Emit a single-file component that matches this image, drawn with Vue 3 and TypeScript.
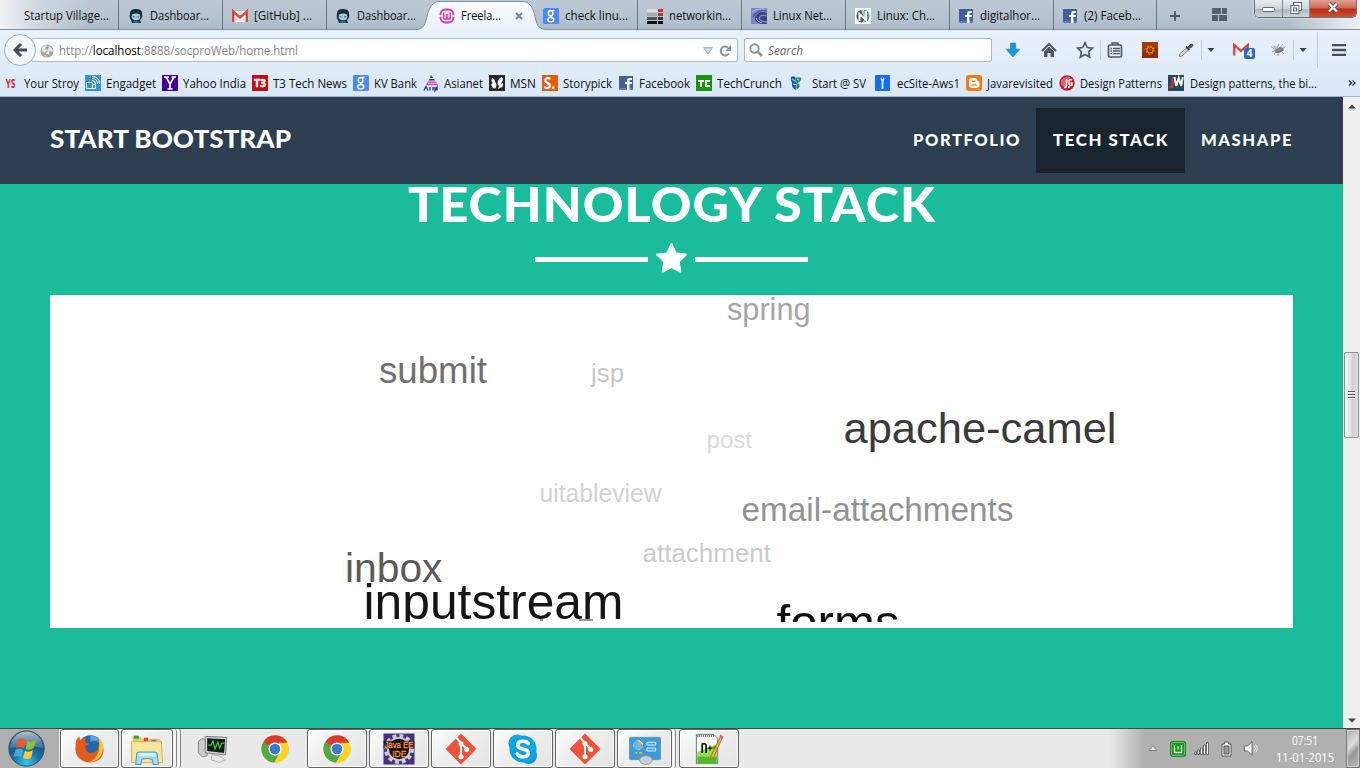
<script setup lang="ts">
import type { Directive } from 'vue'

interface Tab { title: string; icon: string; w: number; tw: number; pad: number; gap: number; active?: boolean }
interface Bookmark { title: string; icon: string; w: number; tw: number; gap: number }
interface Tool { icon: string; ml: number; w: number; h: number }
interface Word { t: string; x: number; y: number; s: number; w: number; c: string }
interface Task { icon: string; ml: number; w: number; iw: number; framed: boolean; stack?: number }

/* Condenses a label horizontally so that it fills exactly the given width. */
const vFit: Directive<HTMLElement, number> = {
  mounted(el, binding) {
    const natural = el.getBoundingClientRect().width
    if (!natural) return
    el.style.transform = `scaleX(${binding.value / natural})`
    el.style.marginRight = `${binding.value - natural}px`
  },
}

const tabs: Tab[] = [
  { title: 'Startup Village...', icon: '', w: 119, tw: 85, pad: 24, gap: 0 },
  { title: 'Dashboar...', icon: 'octo', w: 104, tw: 59, pad: 9, gap: 6 },
  { title: '[GitHub] ...', icon: 'gmail', w: 104, tw: 58, pad: 9, gap: 6 },
  { title: 'Dashboar...', icon: 'octo', w: 104, tw: 59, pad: 8, gap: 6 },
  { title: 'Freela...', icon: 'wamp', w: 104, tw: 40, pad: 7, gap: 6, active: true },
  { title: 'check linu...', icon: 'google', w: 103, tw: 63, pad: 8, gap: 6 },
  { title: 'networkin...', icon: 'net', w: 104, tw: 62, pad: 9, gap: 6 },
  { title: 'Linux Net...', icon: 'linux', w: 104, tw: 59, pad: 9, gap: 6 },
  { title: 'Linux: Ch...', icon: 'nix', w: 104, tw: 58, pad: 9, gap: 6 },
  { title: 'digitalhor...', icon: 'fb', w: 104, tw: 60, pad: 8, gap: 6 },
  { title: '(2) Faceb...', icon: 'fb', w: 103, tw: 57, pad: 8, gap: 6 },
]

const bookmarks: Bookmark[] = [
  { title: 'Your Stroy', icon: 'ys', w: 82, tw: 55, gap: 5 },
  { title: 'Engadget', icon: 'engadget', w: 77, tw: 50, gap: 5 },
  { title: 'Yahoo India', icon: 'yahoo', w: 90, tw: 63, gap: 5 },
  { title: 'T3 Tech News', icon: 't3', w: 101, tw: 74, gap: 5 },
  { title: 'KV Bank', icon: 'google', w: 70, tw: 43, gap: 5 },
  { title: 'Asianet', icon: 'asianet', w: 66, tw: 39, gap: 5 },
  { title: 'MSN', icon: 'msn', w: 53, tw: 26, gap: 5 },
  { title: 'Storypick', icon: 'story', w: 76, tw: 49, gap: 5 },
  { title: 'Facebook', icon: 'fb', w: 78, tw: 51, gap: 5 },
  { title: 'TechCrunch', icon: 'tc', w: 92, tw: 65, gap: 5 },
  { title: 'Start @ SV', icon: 'sv', w: 87, tw: 54, gap: 8 },
  { title: 'ecSite-Aws1', icon: 'ec', w: 91, tw: 63, gap: 6 },
  { title: 'Javarevisited', icon: 'blogger', w: 93, tw: 66, gap: 5 },
  { title: 'Design Patterns', icon: 'jg', w: 109, tw: 82, gap: 5 },
  { title: 'Design patterns, the bi...', icon: 'jw', w: 160, tw: 127, gap: 6 },
]

const tools: Tool[] = [
  { icon: 'download', ml: 14, w: 14, h: 14 },
  { icon: 'home', ml: 21, w: 16, h: 16 },
  { icon: 'star', ml: 19, w: 18, h: 18 },
  { icon: 'sep', ml: 6, w: 1, h: 20 },
  { icon: 'list', ml: 6, w: 16, h: 16 },
  { icon: 'gear', ml: 19, w: 16, h: 16 },
  { icon: 'dropper', ml: 20, w: 16, h: 16 },
  { icon: 'sep', ml: 7, w: 1, h: 20 },
  { icon: 'caret', ml: 5, w: 8, h: 8 },
  { icon: 'mail4', ml: 18, w: 22, h: 17 },
  { icon: 'bug', ml: 15, w: 16, h: 16 },
  { icon: 'sep', ml: 7, w: 1, h: 20 },
  { icon: 'caret', ml: 5, w: 8, h: 8 },
  { icon: 'sep', ml: 10, w: 1, h: 36 },
  { icon: 'menu', ml: 13, w: 16, h: 14 },
]

const words: Word[] = [
  { t: 'spring', x: 677, y: 25, s: 30.5, w: 83.5, c: '#a6a6a6' },
  { t: 'submit', x: 329, y: 88, s: 37, w: 108, c: '#707070' },
  { t: 'jsp', x: 541, y: 87, s: 25.5, w: 33, c: '#c8c8c8' },
  { t: 'apache-camel', x: 793.5, y: 148, s: 43, w: 273, c: '#3a3a3a' },
  { t: 'post', x: 656.5, y: 152.5, s: 24, w: 45.5, c: '#dadada' },
  { t: 'uitableview', x: 489.5, y: 206.5, s: 25.5, w: 122, c: '#d2d2d2' },
  { t: 'email-attachments', x: 691.5, y: 226, s: 34, w: 272, c: '#929292' },
  { t: 'attachment', x: 592.5, y: 267, s: 25.5, w: 128.5, c: '#cccccc' },
  { t: 'inbox', x: 295, y: 287, s: 41, w: 97.5, c: '#5a5a5a' },
  { t: 'inputstream', x: 313.5, y: 324, s: 49.5, w: 260, c: '#151515' },
  { t: 'forms', x: 726.5, y: 344, s: 49, w: 123, c: '#111111' },
]

const tasks: Task[] = [
  { icon: 'firefox', ml: 1, w: 59, iw: 31, framed: true },
  { icon: 'explorer', ml: 2, w: 52, iw: 34, framed: true, stack: 2 },
  { icon: 'monitor', ml: 4, w: 56, iw: 32, framed: false },
  { icon: 'chrome', ml: 1, w: 65, iw: 30, framed: false },
  { icon: 'chrome', ml: 0, w: 60, iw: 30, framed: true },
  { icon: 'java', ml: 2, w: 60, iw: 32, framed: true },
  { icon: 'git', ml: 2, w: 60, iw: 32, framed: true },
  { icon: 'skype', ml: 2, w: 60, iw: 32, framed: true },
  { icon: 'git', ml: 2, w: 60, iw: 32, framed: true },
  { icon: 'panel', ml: 2, w: 55, iw: 32, framed: true, stack: 1 },
  { icon: 'npp', ml: 3, w: 60, iw: 32, framed: true },
]

const label = (x: number, y: number, s: number, c: string, t: string, extra = '') =>
  `<text x="${x}" y="${y}" font-size="${s}" fill="${c}" text-anchor="middle" font-weight="bold" font-family="Open Sans, sans-serif" ${extra}>${t}</text>`

/* Sixteen-unit icons used by tabs, bookmarks and the toolbar. */
const glyphs: Record<string, string> = {
  octo: '<path d="M2 5Q2 1 8 1t6 4q1 5-2 7l1 3H4l-1-3Q1 10 2 5z" fill="#14303c"/><path d="M4 6.500q4-2 8 0 1 5-2 5.500H6Q3 11 4 6.500z" fill="#a9cbdc"/><circle cx="6" cy="8.800" r=".8" fill="#2a5563"/><circle cx="10" cy="8.800" r=".8" fill="#2a5563"/><path d="M5 15l1-2.500h4l1 2.500z" fill="#37677a"/>',
  gmail: '<path d="M0 3h16v11H0z" fill="#f4f2f0"/><path d="M3 13l4-5m6 5L9 8" stroke="#ccc" fill="none"/><path d="M1.2 14V3.5L8 9.5l6.8-6V14" fill="none" stroke="#d54b3d" stroke-width="2.4"/>',
  wamp: '<rect x="1.5" y="1.5" width="13" height="13" rx="5" fill="#fbe9f5" stroke="#e5309b" stroke-width="1.8"/><path d="M0 8h3m10 0h3" stroke="#f6fafd" stroke-width="1.300"/><path d="M4.8 4.500v5.500q0 1 1 1h1.200q1 0 1-1V6v4q0 1 1 1h1.2q1 0 1-1V4.500" fill="none" stroke="#e5309b" stroke-width="1.5"/>',
  google: '<rect width="16" height="16" rx="1.5" fill="#4a8af4"/><ellipse cx="7.6" cy="5.2" rx="2.3" ry="2.6" fill="none" stroke="#fff" stroke-width="1.5"/><path d="M9 2.5h2.5M9 7.5q-3 1 0 2.2" stroke="#fff" stroke-width="1.3" fill="none"/><ellipse cx="7.8" cy="11.7" rx="3" ry="2.2" fill="none" stroke="#fff" stroke-width="1.4"/>',
  net: '<path d="M0 1h10v3H0z" fill="#ddd"/><path d="M0 5h10v3H0z" fill="#aaa"/><path d="M0 9h10v3H0z" fill="#555"/><path d="M0 13h10v3H0z" fill="#111"/><path d="M11 1h5v3h-5zm0 4h5v3h-5z" fill="#c33"/><path d="M11 9h5v3h-5z" fill="#433"/><path d="M11 13h5v3h-5z" fill="#111"/>',
  linux: '<path d="M0 0h16v16H0z" fill="#7f86c6"/><path d="M16 5Q8 2 4 9q-1 5 6 7h6z" fill="#3c4484"/><path d="M16 3Q7 1 2 9" fill="none" stroke="#565da4" stroke-width="1.500"/><path d="M16 8q-6-2-8 2 1 4 8 4" fill="none" stroke="#8288c4" stroke-width="1.300"/><path d="M5 10q1 4 6 5M1 4Q6 0 14 1" stroke="#b7bae5" fill="none"/>',
  nix: '<path d="M0 0h16v16H0z" fill="#fff"/><path d="M8 1.500a6.500 6.500 0 1 0 0 13 6.500 6.500 0 1 0 0-13z" fill="#c9ced2"/><path d="M1.500 8Q2 3 6 2l4 9-3 3.500Q2 14 1.500 8z" fill="#49565f"/><path d="M9 2q5 0 5.500 6-.5 6-6 6.500l2-3.500z" fill="#2f9fd4"/><path d="M4.500 13V6l6.500 6V3" fill="none" stroke="#fff" stroke-width="2"/>',
  fb: '<path d="M1 1h14v14H1z" fill="#43609c"/><path d="M1 13h14v2H1z" fill="#657eb0"/><path d="M9 15V9H7V7h2V5.5Q9 3 11.5 3H14v2h-1.600q-1 0-1 1v1H14l-.3 2h-2.300v6z" fill="#fff"/>',
  ys: label(7.6, 12.6, 12, '#d4202c', 'YS', 'textLength="9.500" lengthAdjust="spacingAndGlyphs"'),
  engadget: '<path d="M0 0h16v16H0z" fill="#3394d3"/><path d="M1.500 7.500h6v6h-6zM7.500 9.500h3v4h-3" fill="none" stroke="#fff"/><path d="M7 5.500q3.500 0 3.500 3.500M7 3.500q5.500 0 5.500 5.500M7 1.500q7.500 0 7.500 7.500" fill="none" stroke="#fff" stroke-width="1"/>',
  yahoo: '<path d="M0 0h16v16H0z" fill="#430297"/><path d="M2 2h5M9.500 2H14M4 2l4 7 4-7M8 8v6M5.500 14h5" fill="none" stroke="#fff" stroke-width="1.7"/>',
  t3: '<path d="M0 0h16v16H0z" fill="#c90c0f"/>' + label(8, 12, 11, '#fff', 'T3', 'textLength="12" lengthAdjust="spacingAndGlyphs" stroke="#fff" stroke-width=".5"'),
  asianet: '<path d="M8 0l2 3H7zM6.500 4h4.500l1 1.500H5.500z" fill="#302b93"/><path d="M5 6.500h8l2 3.500H3z" fill="#d63d91"/><path d="M5 8.300h10" stroke="#fff" stroke-width=".8"/><path d="M1 15.500l2-4 2 4M7 12v3.500m3-3.500v3.500m2-3.500v3.500l2-3.500v3.500" stroke="#302b93" fill="none" stroke-width="1.300"/>',
  msn: '<path d="M0 0h16v16H0z" fill="#292929"/><path d="M7.500 10Q5 2 3 3q-1.500 3 1 5-3 1-1 3.500 1 2.500 3 2 1.500-1 1.500-3.500z" fill="#fff"/><path d="M8.500 9q0-5 4-7 2 1 1 4l-1.500 3 2-1q1 4-3 5l-2 1 1-3z" fill="#eee"/>',
  story: '<path d="M0 0h16v16H0z" fill="#e95b0c"/>' + label(7.5, 14, 16, '#fff', 'S.', 'textLength="11.500" lengthAdjust="spacingAndGlyphs"'),
  tc: '<path d="M0 0h16v16H0z" fill="#169510"/><path d="M2 5h6v2H6v5H4V7H2zM9 5h5v2h-3v3h3v2H9z" fill="#fff"/>',
  sv: '<path d="M3 2q3-2 5 1-2 3 1 5-2 4-1 7-5-2-4-7Q2 5 3 2z" fill="#15609d"/><path d="M8 2.500h5q1 3-3 5.500 4 3-1.500 6.500-1-4 1-6Q6 5 8 2.500z" fill="#268e62"/><path d="M4 4l3 2m-2 3l4 1m0-6l2 1" stroke="#9fd0d8" stroke-width="1.200"/>',
  ec: '<rect width="15" height="16" rx="1" fill="#176ce8"/><path d="M7.500 5v9" stroke="#cfe2ff" stroke-width="2"/><circle cx="7.500" cy="4" r="2" fill="#cfe2ff"/><path d="M6.500 1l1 3 1-3" stroke="#176ce8" fill="none"/>',
  blogger: '<rect width="16" height="16" rx="3" fill="#f47a16"/><path d="M6 3h3q2.500 0 2.500 3 2 0 2 2v2q0 3-3 3H6q-3 0-3-3V6q0-3 3-3z" fill="#fff"/><path d="M6.300 6.300h2.500M6.300 10h4" stroke="#f47a16" stroke-width="1.600" stroke-linecap="round"/>',
  jg: '<circle cx="8" cy="8" r="7.700" fill="#bf1f2a"/><path d="M2 5q4-4 9-3L7 12q-4 0-5-3z" fill="#e0606a"/><path d="M7.500 4v7q0 2-2.500 1.500M13 5q-3-1.500-3 2.500t3 2.500V8h-1.500M10 11v2" stroke="#fff" stroke-width="1.500" fill="none"/>',
  jw: '<path d="M0 0h16v16H0z" fill="#22475c"/><path d="M4.500 2v8q0 3-3.500 2" fill="none" stroke="#d83232" stroke-width="2.200"/><path d="M6.500 2l1.800 9 2.400-8 2.400 8 1.700-9" fill="none" stroke="#fff" stroke-width="2"/>',
  download: '<path d="M5 0h6v7h5l-8 9-8-9h5z" fill="#1a94dc" stroke="#1479bb" stroke-width=".6"/>',
  home: '<path d="M1 9l7-7 7 7" fill="none" stroke="#505963" stroke-width="2"/><path d="M3 9.500l5-5 5 5V15H9.500v-4h-3v4H3z" fill="#505963"/>',
  star: '<path d="M8 1.500l2 4.300 4.600.6-3.400 3.200.9 4.700L8 12l-4.100 2.300.9-4.700L1.400 6.400 6 5.800z" fill="none" stroke="#505963" stroke-width="1.500"/>',
  list: '<path d="M5 3V1h6v2" fill="none" stroke="#505963" stroke-width="1.600"/><rect x="1.500" y="3" width="13" height="12" rx="1.500" fill="none" stroke="#505963" stroke-width="1.700"/><path d="M3.500 6.500h1.500m1 0h7M3.500 9h1.500m1 0h7m-9.500 2.700h1.500m1 0h7" stroke="#505963" stroke-width="1.300"/>',
  gear: '<path d="M0 0h16v16H0z" fill="#8f2f08"/><path d="M0 0h16v6L0 10z" fill="#a23b0c"/><circle cx="8" cy="8" r="3.900" fill="none" stroke="#df8b12" stroke-width="1.500" stroke-dasharray="1.500 1.560"/><circle cx="8" cy="8" r="3" fill="none" stroke="#df8b12"/>',
  dropper: '<path d="M1 14.500l1-3 6.500-5.500 2 2-6.500 6z" fill="#d4d6d9" stroke="#8a8a8a" stroke-width="1"/><path d="M8 4.500l3.500 3.500" stroke="#444" stroke-width="2"/><path d="M10 5l2.500-2.500q2.500-1 2.500 1L12.500 6z" fill="#555" stroke="#444"/>',
  caret: '<path d="M1 4h14L8 12z" fill="#39424b"/>',
  bug: '<path d="M1 4.500l5 3.500-4 2m4-1-2 4m4-3v4m3-5 3 3M9 7l4-5M7 6l2-4" stroke="#8d8f92" fill="none" stroke-width=".9"/><path d="M5 8l5-3 3 1 1 2.500-5 2.500H6z" fill="#77797c"/><path d="M2.500 3l5.500 2.500L5 7.500zm9.500 2 4-1-2 3zM7 9l3-2 1 1z" fill="#b5b9bd"/>',
  menu: '<path d="M0 2.500h16M0 8h16M0 13.500h16" stroke="#475059" stroke-width="2.700"/>',
  mail4: '<path d="M0 2h16v12H0z" fill="#f7f3f3"/><path d="M1.200 13.500V3L8 9l6.800-6v10" stroke="#dc3f3d" stroke-width="2.200" fill="none"/><rect x="11" y="6" width="11" height="11" rx="2" fill="#3167c6"/>' + label(16.500, 15, 10, '#fff', '4'),
  globe: '<circle cx="8" cy="8" r="7.500" fill="#a5a5a5"/><path d="M2 4q4-4 6-2L6 5l2 2-3 3-3-2zM10 2l4 3 1 4-4-1-1 4-3-1 2-5zM4 12l3 1 0 2z" fill="#e4e4e4"/>',
}

/* Thirty-two-unit icons used by the taskbar. */
const apps: Record<string, string> = {
  firefox: '<circle cx="17" cy="15" r="13" fill="#2467aa"/><path d="M17 2a13 13 0 0 1 12 9q-6-5-12-2z" fill="#5ba4dc"/><path d="M2 7l3-4 1 4q3-3 7-1-3 2-1 4l4 1q-2 1-4 2-1 7 6 8 8-1 8-10l-2-5q7 5 7 12-1 12-15 13Q2 29 1 17q0-6 1-10z" fill="#e15d19"/><path d="M26 5q6 6 4 14-3 11-15 12 9-4 11-13 1-7 0-13z" fill="#f6c53b"/>',
  explorer: '<path d="M2 4h8l1 2h18v22H2z" fill="#e6c967"/><path d="M3 3h5v3H3z" fill="#30a14b"/><path d="M13 5h4v4h-4z" fill="#d94b31"/><path d="M20 7h5v3h-5z" fill="#3892cf"/><path d="M1 9h29l1 20H1z" fill="#f7e69b" stroke="#d1b45d"/><path d="M5 31l1-10q0-2 3-2h14q3 0 3 2l1 10h-5l-1-5q-5-1.500-10 0l-1 5z" fill="#a5d9ee" stroke="#4b9fc7"/><path d="M8 20h16v3H8z" fill="#d8f2fa"/>',
  monitor: '<path d="M1 8l4-3 5 3v15l-5 1-4-4z" fill="#c9cccd" stroke="#888"/><path d="M8 3l22 1-1 18-21-2z" fill="#d7d9da" stroke="#777"/><path d="M10 5l18.500 1-1 14-17.500-2z" fill="#141a16"/><path d="M11 12l3 0 2-4 2 8 3-7 2 6 2-5 3 0" stroke="#39cf47" fill="none" stroke-width="1.200"/><path d="M15 22l7 1 7 4-6 3-9-3z" fill="#e4e6e7" stroke="#b5b5b5"/>',
  chrome: '<circle cx="16" cy="16" r="15" fill="#fbd228"/><path d="M16 16L3 8.500A15 15 0 0 1 29.500 9z" fill="#d93b30"/><path d="M16 16L3 8.500A15 15 0 0 0 15 31l7-11.500z" fill="#52a847"/><path d="M29.500 9A15 15 0 0 1 15 31l7-12-2-10z" fill="#fbd228"/><circle cx="16" cy="16" r="7.200" fill="#fff"/><circle cx="16" cy="16" r="5.800" fill="#3b7cc9"/>',
  java: '<path d="M0 0h32v32H0z" fill="#46327f"/><circle cx="16" cy="16" r="13.500" fill="none" stroke="#cecbd4" stroke-width="4" stroke-dasharray="4 3.070"/><circle cx="16" cy="16" r="11.500" fill="#171519" stroke="#cecbd4" stroke-width="2"/><path d="M0 7.500h32v8H0z" fill="#171519" opacity=".75"/>'
    + '<text x="1" y="15" textLength="30" lengthAdjust="spacingAndGlyphs" font-size="10" fill="#ff9236" stroke="#ff9236" stroke-width=".3" font-family="Liberation Sans, sans-serif">Java EE</text><text x="9" y="24.500" textLength="14.500" lengthAdjust="spacingAndGlyphs" font-size="10" fill="#ff9236" stroke="#ff9236" stroke-width=".3" font-family="Liberation Sans, sans-serif">IDE</text>',
  git: '<path d="M16 0l16 16-16 16L0 16z" fill="#ed5338"/><path d="M11 4l5 6v14M16 10l6 6" stroke="#fff" stroke-width="2.100" fill="none"/><circle cx="16" cy="10.500" r="2.600" fill="#fff"/><circle cx="22" cy="16.500" r="2.600" fill="#fff"/><circle cx="16" cy="24" r="2.600" fill="#fff"/>',
  skype: '<circle cx="10" cy="10" r="9" fill="#13a8e4"/><circle cx="22" cy="23" r="8.500" fill="#079bd8"/><circle cx="16" cy="16" r="14" fill="#0da4e1"/><path d="M21.500 10.500Q20 8 16 8q-5.500 0-5.500 4 0 3 5 4 6 1 6 4 0 4-5.500 4-4.500 0-6-3" fill="none" stroke="#fff" stroke-width="3.700" stroke-linecap="round"/>',
  panel: '<rect x="0" y="4" width="32" height="23" rx="1" fill="#3f9bd6" stroke="#6698b8"/><circle cx="9" cy="12" r="4.500" fill="#f1a83b" stroke="#fff"/><path d="M9 7v5h5q-1 5-6 5-4-1-4-5 1-5 5-5z" fill="#63b7e5"/><path d="M18 9h9v3h-9zm0 6h9v3h-9z" fill="#4ba7df" stroke="#d8effa"/><path d="M6 20h2m2 0h3" stroke="#f4b13c" stroke-width="2"/><ellipse cx="17" cy="27.500" rx="6.500" ry="4.500" fill="#c9cfd2" stroke="#999"/>',
  npp: '<path d="M3 1h18l4 4v26H3z" fill="#f9faf7" stroke="#777"/><path d="M4 19q10-4 20-8v20H4z" fill="#95db4c"/><path d="M4 24h20v7H4z" fill="#54b92f"/><path d="M4 2.500h18" stroke="#666" stroke-width="2" stroke-dasharray="1 1"/><path d="M9 20v-9q4-1.500 4 2v7" fill="none" stroke="#171717" stroke-width="1.800"/><path d="M14.500 15h5m-2.500-2.500v5M20.500 15h4m-2-2v4" stroke="#171717" stroke-width="1.300"/><path d="M28 3l2 1-9 20-3 3 0-4z" fill="#e9b53c" stroke="#8d652b" stroke-width=".8"/><path d="M27.500 1l3.500 2-1.200 3-3.300-2z" fill="#ca6d71"/>',
}
</script>

<template>
  <div class="screen">
    <header class="browser">
      <div class="tabstrip">
        <div v-for="(tab, i) in tabs" :key="i" class="tab" :class="{ active: tab.active, before: i === 3 }" :style="{ width: tab.w + 'px', paddingLeft: tab.pad + 'px' }">
          <svg v-if="tab.active" class="tab-shape" width="130" height="30" viewBox="0 0 130 30">
            <defs><linearGradient id="tabfill" x2="0" y2="1"><stop stop-color="#f8fbfe" /><stop offset="1" stop-color="#e9f1fa" /></linearGradient></defs>
            <path d="M0 29.500C11 29 9 20 13 10Q16 1.500 24 1.500H106Q114 1.500 117 10C121 20 119 29 130 29.500V30H0z" fill="url(#tabfill)" />
            <path d="M0 29.500C11 29 9 20 13 10Q16 1.500 24 1.500H106Q114 1.500 117 10C121 20 119 29 130 29.500" fill="none" stroke="#8091a3" />
          </svg>
          <svg v-if="tab.icon" class="ico" width="16" height="16" viewBox="0 0 16 16" v-html="glyphs[tab.icon]" />
          <span v-fit="tab.tw" class="ui" :style="{ marginLeft: tab.gap + 'px' }">{{ tab.title }}</span>
          <svg v-if="tab.active" class="close-tab" width="8" height="8" viewBox="0 0 8 8"><path d="M1 1l6 6m0-6L1 7" stroke="#7d8791" stroke-width="2.200" /></svg>
        </div>
        <svg class="plus" width="10" height="10" viewBox="0 0 10 10"><path d="M5 0v10M0 5h10" stroke="#4c5965" stroke-width="1.800" /></svg>
        <svg class="groups" width="15" height="15" viewBox="0 0 15 15"><path d="M0 1h9v6H0zm10 0h5v6h-5zM0 8h6v6H0zm7 0h8v6H7z" fill="#56616c" /></svg>
        <div class="win-controls">
          <span class="wc min"><svg width="13" height="6"><rect x=".5" y=".5" width="12" height="4" rx="1" fill="#fff" stroke="#5d6a76" /></svg></span>
          <span class="wc max"><svg width="13" height="13"><rect x="3.500" y=".5" width="8" height="8" fill="#fff" stroke="#5d6a76" /><rect x=".8" y="3.500" width="8" height="8" fill="#fff" stroke="#5d6a76" /><rect x="3.500" y="6" width="3" height="3" fill="none" stroke="#5d6a76" /></svg></span>
          <span class="wc shut"><svg width="12" height="11" viewBox="0 0 12 11"><path d="M2 1.500l8 8m0-8l-8 8" stroke="#61413f" stroke-width="4" /><path d="M2 1.500l8 8m0-8l-8 8" stroke="#fff" stroke-width="2.400" /></svg></span>
        </div>
      </div>

      <div class="toolbar">
        <span class="back"><svg width="15" height="14" viewBox="0 0 15 14"><path d="M8 1L2 7l6 6M2 7h12" fill="none" stroke="#414b55" stroke-width="3" /></svg></span>
        <div class="url">
          <svg class="ico" width="14" height="14" viewBox="0 0 16 16" v-html="glyphs.globe" />
          <span v-fit="239" class="ui address">http://<b>localhost</b>:8888/socproWeb/home.html</span>
          <svg class="drop" width="10" height="8" viewBox="0 0 10 8"><path d="M.7.700h8.600L5 7z" fill="#d4d9df" stroke="#a1a9b2" /></svg>
          <svg class="reload" width="13" height="12" viewBox="0 0 13 12"><path d="M10 8.500A4.500 4.500 0 1 1 9 2.500" fill="none" stroke="#8b949e" stroke-width="2" /><path d="M12 0v6H6z" fill="#8b949e" /></svg>
        </div>
        <div class="search">
          <svg width="14" height="14" viewBox="0 0 14 14"><circle cx="5.500" cy="5.500" r="4.200" fill="none" stroke="#8e9297" stroke-width="1.900" /><path d="M8.600 8.600L13 13" stroke="#8e9297" stroke-width="2.500" /></svg>
          <span v-fit="35" class="ui hint">Search</span>
        </div>
        <template v-for="(tool, i) in tools" :key="i">
          <span v-if="tool.icon === 'sep'" class="sep" :style="{ marginLeft: tool.ml + 'px', height: tool.h + 'px' }" />
          <svg v-else class="ico" :width="tool.w" :height="tool.h" :viewBox="tool.icon === 'mail4' ? '0 0 22 17' : '0 0 16 16'" :style="{ marginLeft: tool.ml + 'px' }" v-html="glyphs[tool.icon]" />
        </template>
      </div>

      <div class="bookmarks">
        <div v-for="mark in bookmarks" :key="mark.title" class="bookmark" :style="{ width: mark.w + 'px' }">
          <svg class="ico" width="16" height="16" viewBox="0 0 16 16" v-html="glyphs[mark.icon]" />
          <span v-fit="mark.tw" class="ui" :style="{ marginLeft: mark.gap + 'px' }">{{ mark.title }}</span>
        </div>
        <svg class="more" width="8" height="6" viewBox="0 0 8 6"><path d="M1 .5L3.500 3 1 5.500M4.500.5L7 3 4.500 5.500" fill="none" stroke="#222" stroke-width="1.200" /></svg>
      </div>
    </header>

    <main class="viewport">
      <div class="page">
        <nav class="navbar">
          <div class="brand"><span v-fit="241" class="mont">START BOOTSTRAP</span></div>
          <div class="links">
            <a class="link first"><span v-fit="108" class="mont">PORTFOLIO</span></a>
            <a class="link current"><span v-fit="116" class="mont">TECH STACK</span></a>
            <a class="link last"><span v-fit="92" class="mont">MASHAPE</span></a>
          </div>
        </nav>
        <section class="stack">
          <h2><span v-fit="528" class="mont">TECHNOLOGY STACK</span></h2>
          <div class="divider">
            <i />
            <svg width="31" height="30" viewBox="0 0 31 30"><path d="M15.500 0q.8 0 1.200 1l3.700 8.600 9.300 1q2 .4.700 1.800L23.700 19l1.600 9.200q.2 1.900-1.500 1.300L15.500 25.200l-8.300 4.300q-1.700.6-1.500-1.300L7.300 19 .6 12.400q-1.300-1.400.7-1.800l9.300-1L14.300 1q.4-1 1.200-1z" fill="#fff" /></svg>
            <i />
          </div>
          <div class="cloud">
            <svg width="1243" height="327" viewBox="0 0 1243 327">
              <text v-for="word in words" :key="word.t" :x="word.x" :y="word.y" :font-size="word.s" :textLength="word.w" lengthAdjust="spacingAndGlyphs" :fill="word.c">{{ word.t }}</text>
              <path d="M529 325h14" stroke="#999" stroke-width="2" /><path d="M490 324h3v2h-3z" fill="#888" />
            </svg>
          </div>
        </section>
      </div>
      <aside class="scrollbar">
        <svg class="arrow" width="8" height="5" viewBox="0 0 8 5"><path d="M0 4.500L4 .5l4 4z" fill="#444" /></svg>
        <div class="thumb"><i /><i /><i /></div>
        <svg class="arrow down" width="8" height="5" viewBox="0 0 8 5"><path d="M0 .5l4 4 4-4z" fill="#444" /></svg>
      </aside>
    </main>

    <footer class="taskbar">
      <div class="start">
        <svg width="37" height="37" viewBox="0 0 37 37">
          <defs>
            <radialGradient id="orb" cx=".5" cy=".9" r=".8"><stop stop-color="#35c9ef" /><stop offset=".5" stop-color="#1a699f" /><stop offset="1" stop-color="#274964" /></radialGradient>
            <linearGradient id="gloss" x2="0" y2="1"><stop stop-color="#e2edf4" stop-opacity=".75" /><stop offset="1" stop-color="#b8d2e3" stop-opacity=".2" /></linearGradient>
          </defs>
          <circle cx="18.500" cy="18.500" r="17.700" fill="url(#orb)" stroke="#345a75" />
          <path d="M2 18a16.500 16.500 0 0 1 33 0q-16-4-33 0z" fill="url(#gloss)" />
          <path d="M10 10q4-3 8 0l-2 8q-4-2-8 0z" fill="#ed5b24" /><path d="M19.500 11q4 2 9-1l-3 8q-4 3-8 1z" fill="#8ac43f" />
          <path d="M7.500 20q4-3 8 0l-2 7q-4-2-8 0z" fill="#45a7e1" /><path d="M17 21q4 2 8-1l-2 8q-4 2-8 0z" fill="#fccb31" />
        </svg>
      </div>
      <template v-for="(task, i) in tasks" :key="i">
        <div class="task" :class="{ framed: task.framed }" :style="{ marginLeft: task.ml + 'px', width: task.w + 'px' }">
          <svg :width="task.iw" :height="task.iw" viewBox="-.5 -.5 33 33" v-html="apps[task.icon]" />
        </div>
        <span v-for="n in task.stack ?? 0" :key="n" class="edge" />
      </template>
      <div class="tray">
        <svg class="up" width="8" height="5" viewBox="0 0 8 5"><path d="M0 4.500L4 .5l4 4z" fill="#fff" stroke="#666" stroke-width=".7" /></svg>
        <svg class="wampt" width="16" height="16" viewBox="0 0 16 16"><rect x=".8" y=".8" width="14.400" height="14.400" rx="2" fill="#dff5dc" stroke="#19861d" stroke-width="1.500" /><rect x="2" y="2" width="12" height="12" fill="#169b1b" /><path d="M4.500 4v7.500h7V4M8 5.500v3" fill="none" stroke="#e4f8e2" stroke-width="1.300" /></svg>
        <svg class="signal" width="16" height="13" viewBox="0 0 16 13"><path d="M.5 10h2v2.500h-2zm3-2h2v4.500h-2zm3-2h2v6.500h-2zm3-3h2v9.500h-2zm3-2.500h2v12h-2z" fill="#fff" stroke="#555" stroke-width=".8" /></svg>
        <svg class="battery" width="11" height="16" viewBox="0 0 11 16"><path d="M3.500 1h4v2H10v12H1V3h2.500z" fill="#fff" stroke="#555" /><path d="M3 5h5v8H3z" fill="#999" stroke="#555" /></svg>
        <svg class="sound" width="14" height="15" viewBox="0 0 14 15"><path d="M.5 5h3L8 .7v13.600L3.500 10h-3z" fill="#fff" stroke="#555" stroke-width=".8" /><path d="M10 4.500q2.500 3 0 6M11.500 3.500q3.500 4 0 8" fill="none" stroke="#eee" /></svg>
        <div class="clock"><span v-fit="26" class="ui">07:51</span><span v-fit="58" class="ui">11-01-2015</span></div>
        <div class="peek" />
      </div>
    </footer>
  </div>
</template>

<style>
html, body { margin: 0; overflow: hidden; }
</style>

<style scoped>
.screen { width: 1360px; height: 768px; display: flex; flex-direction: column; overflow: hidden; font-family: "Open Sans", "Noto Sans", sans-serif; }
.screen * { box-sizing: border-box; }
svg { display: block; flex: none; }
.ico { overflow: visible; }
.ui { display: inline-block; flex: none; white-space: pre; transform-origin: 0 50%; font-size: 12px; line-height: 16px; color: #111; }
.browser { height: 97px; flex: none; background: #dce9f7; border-bottom: 1px solid #a0b2c6; }
.tabstrip { height: 30px; display: flex; align-items: center; position: relative; background: linear-gradient(90deg, #f1f3f5 0, #cdd5de 40px, transparent 90px, transparent 1290px, #dce3ea 1340px, #eef1f4), linear-gradient(#bdc9d5, #b6c3d0 60%, #aebac7); border-bottom: 1px solid #8091a3; }
.tab { height: 30px; flex: none; display: flex; align-items: center; position: relative; padding-top: 2px; border-right: 1px solid #657585; }
.tab.active, .tab.before { border-right-color: transparent; }
.tab.active { left: 1px; z-index: 2; }
.tab-shape { position: absolute; left: -16px; top: 0; z-index: -1; }
.close-tab { margin-left: 14px; }
.plus { margin-left: 13px; margin-top: 2px; }
.groups { margin-left: 32px; }
.win-controls { position: absolute; right: 3px; top: 0; height: 18px; width: 103px; display: flex; border: 1px solid #66727e; border-top: 0; border-radius: 0 0 5px 5px; overflow: hidden; box-shadow: 0 0 2px #fff; }
.wc { display: flex; align-items: center; justify-content: center; background: linear-gradient(#e8ecef, #cfd5da 50%, #afb8c1 52%, #cbd3da); border-right: 1px solid #7d8792; width: 28px; }
.wc.max { width: 27px; }
.wc.min { padding-top: 3px; }
.wc.shut { flex: 1; border: 0; padding-bottom: 2px; background: linear-gradient(#dda092, #cf6a56 48%, #bd2a12 52%, #cf5236); }
.toolbar { height: 40px; display: flex; align-items: center; background: linear-gradient(#e9f1fa, #e0ebf8); }
.back { width: 32px; height: 32px; margin-left: 4px; flex: none; border: 1px solid #9eafc2; border-radius: 50%; background: #f3f7fc; display: flex; align-items: center; justify-content: center; position: relative; z-index: 1; }
.url { margin-left: -5px; width: 707px; height: 24px; flex: none; background: #fff; border: 1px solid #a9b9cb; border-radius: 2px; display: flex; align-items: center; padding: 2px 0 0 8px; }
.address { margin-left: 5px; color: #858585; }
.address b { font-weight: 400; color: #000; }
.drop { margin-left: auto; }
.reload { margin: 0 5px 0 6px; }
.search { width: 248px; height: 24px; margin-left: 6px; flex: none; background: #fff; border: 1px solid #a9b9cb; border-radius: 2px; display: flex; align-items: center; padding: 2px 0 0 4px; }
.search svg { margin-top: -2px; }
.hint { margin-left: 5px; font-style: italic; color: #666; }
.sep { width: 1px; flex: none; background: #bdc9d6; }
.bookmarks { height: 26px; display: flex; align-items: center; padding: 0 4px 0 3px; background: linear-gradient(#e0ebf8, #d9e7f6); }
.bookmark { display: flex; align-items: center; flex: none; }
.bookmark .ui { margin-top: 2px; }
.more { margin-left: auto; }
.viewport { height: 631px; flex: none; display: flex; }
.page { width: 1343px; height: 631px; overflow: hidden; background: #1abc9c; }
.mont { display: inline-block; flex: none; white-space: nowrap; transform-origin: 0 50%; font-family: Lato, sans-serif; font-weight: 900; }
.navbar { height: 87px; background: #2c3e50; display: flex; justify-content: space-between; align-items: flex-start; padding: 11px 50px 0 50px; color: #fff; }
.brand { font-size: 25px; line-height: 30px; padding-top: 15px; }
.links { display: flex; }
.link { height: 65px; padding: 22px 16px 0 17px; font-size: 16px; line-height: 20px; display: flex; letter-spacing: 1.500px; }
.current { background: #1a242f; }
.link.first { padding-right: 15px; }
.link.last { padding: 22px 0 0 16px; }
.stack { display: flex; flex-direction: column; align-items: center; }
h2 { margin: 0; height: 59px; color: #fff; font-size: 47.500px; line-height: 39px; letter-spacing: 1px; }
.divider { display: flex; gap: 8px; height: 30px; align-items: center; }
.divider i { width: 113px; height: 5px; background: #fff; margin-top: 3px; }
.cloud { margin-top: 22px; width: 1243px; height: 333px; background: #fff; align-self: flex-start; margin-left: 50px; font-family: "Liberation Sans", Arial, sans-serif; }
.scrollbar { width: 17px; background: #f0f0f0; display: flex; flex-direction: column; align-items: center; position: relative; padding: 7px 0 5px; }
.arrow.down { margin-top: auto; }
.thumb { margin-top: 243px; width: 15px; height: 86px; border: 1px solid #8f9295; border-radius: 2px; background: linear-gradient(90deg, #f5f5f5, #e2e2e4 48%, #cfcfd2 52%, #dedee0); display: flex; flex-direction: column; align-items: center; justify-content: center; gap: 1px; }
.thumb i { width: 7px; height: 2px; background: #55585c; border-bottom: 1px solid #eee; }
.taskbar { height: 40px; display: flex; align-items: stretch; border-top: 1px solid #44484a; background: #e9e9e9; }
.start { width: 59px; background: #afafaf; display: flex; align-items: center; padding-left: 8px; flex: none; }
.task { flex: none; display: flex; align-items: center; justify-content: center; }
.framed { border: 1px solid #626262; border-radius: 3px; background: linear-gradient(135deg, #fcfcfc, #ededed 45%, #e5e5e5); box-shadow: inset 0 0 0 1px #fff; }
.edge { width: 4px; flex: none; border-right: 1px solid #858585; border-radius: 0 3px 3px 0; background: #f3f3f3; }
.tray { margin-left: auto; width: 250px; display: flex; align-items: center; background: linear-gradient(90deg, rgba(176, 176, 176, 0), #b0b0b0 35px); flex: none; }
.up { margin-left: 39px; }
.wampt { margin-left: 13px; }
.signal { margin-left: 8px; }
.battery { margin-left: 11px; }
.sound { margin-left: 12px; }
.clock { width: 62px; margin-left: 16px; display: flex; flex-direction: column; align-items: center; }
.clock .ui { color: #fff; line-height: 17px; }
.peek { margin-left: auto; width: 14px; height: 39px; border: 1px solid #777; background: linear-gradient(135deg, #aaa, #ddd 40%, #999 60%, #bbb); box-shadow: inset 0 0 0 1px #ccc; }
</style>
